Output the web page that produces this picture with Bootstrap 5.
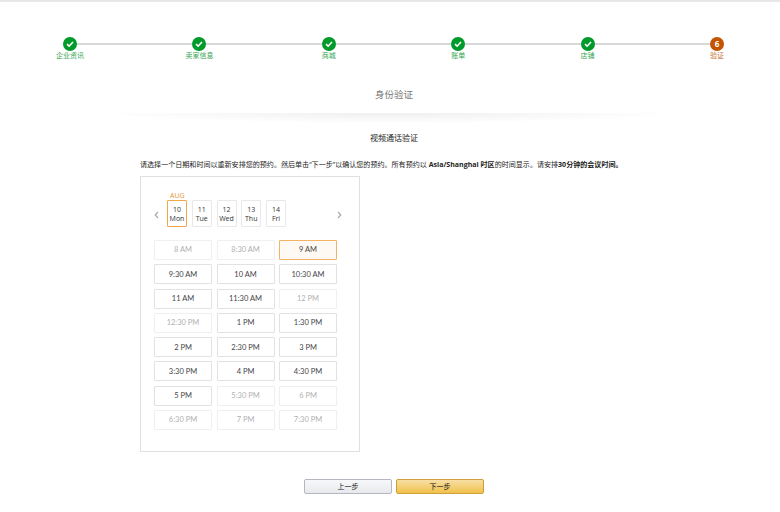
<!DOCTYPE html>
<html lang="zh">
<head>
    <meta charset="UTF-8">
    <title>身份验证</title>
    <link href="https://cdn.jsdelivr.net/npm/bootstrap@5.3.0/dist/css/bootstrap.min.css" rel="stylesheet">
    <style>
        body {
            background-color: #fff;
            border-top: 2px solid #e7e7e7;
            font-family: "Open Sans", "Noto Sans CJK SC", sans-serif;
            font-size: 7px;
            color: #111;
            height: 512px;
            overflow: hidden;
        }
        .stepper {
            position: relative;
            margin: 35px 43px 0 50px;
        }
        .stepper::before {
            content: "";
            position: absolute;
            left: 20px;
            right: 20px;
            top: 6px;
            height: 2px;
            background-color: #d8d8d8;
        }
        .step-item {
            position: relative;
            width: 40px;
            font-size: 7px;
            line-height: 10px;
            color: #35a552;
        }
        .step-item.current {
            color: #c9753a;
        }
        .step-dot {
            width: 14px;
            height: 14px;
            border-radius: 50%;
            background-color: #009a2b;
            color: #fff;
            font-size: 8px;
            font-weight: 700;
        }
        .step-item.current .step-dot {
            background-color: #c45500;
        }
        .page-title {
            margin: 27px 0 0 8px;
            font-size: 9.5px;
            line-height: 14px;
            color: #777;
        }
        .title-rule {
            height: 10px;
            margin: 11px 100px 0 100px;
            background: radial-gradient(ellipse 50% 100% at 50% 0, #efefef 0, #fff 100%);
        }
        .sub-title {
            margin: 9px 0 0 8px;
            font-size: 8px;
            line-height: 12px;
            color: #222;
        }
        .intro-text {
            margin: 14px 0 0 140px;
            font-size: 7.05px;
            line-height: 12px;
            color: #222;
            white-space: nowrap;
        }
        .slot-card {
            width: 220px;
            height: 276px;
            margin: 6px 0 0 140px;
            border: 1px solid #e0e0e0;
            padding: 13px 13px 0;
        }
        .date-row {
            height: 50px;
        }
        .date-arrow {
            width: 13px;
            line-height: 0;
        }
        .date-box {
            position: relative;
            width: 20px;
            height: 27px;
            margin-right: 4.75px;
            margin-top: 10px;
            border: 1px solid #e8e8e8;
            border-radius: 1px;
            font-size: 7px;
            line-height: 9px;
            color: #333;
        }
        .date-box.active {
            border-color: #f0a64a;
        }
        .month-tag {
            position: absolute;
            left: 2px;
            top: -10px;
            font-size: 7px;
            line-height: 9px;
            color: #e8963a;
        }
        .slot-grid {
            display: grid;
            grid-template-columns: 58px 58px 58px;
            column-gap: 4.5px;
            row-gap: 4.3px;
        }
        .slot-btn {
            height: 20px;
            border: 1px solid #e2e2e2;
            border-radius: 1px;
            box-shadow: 0 0 1px #eee;
            font-family: Lato, "Open Sans", sans-serif;
            font-size: 7.5px;
            color: #444;
        }
        .slot-btn.off {
            border-color: #f0f0f0;
            color: #b0b0b0;
        }
        .slot-btn.active {
            border-color: #f3b264;
            background-color: #fef9f2;
        }
        .nav-btn {
            width: 88px;
            height: 15px;
            padding: 0;
            border-radius: 2px;
            font-size: 7px;
            line-height: 13px;
            color: #111;
        }
        .nav-prev {
            border: 1px solid #b4b7bd;
            background: linear-gradient(#f7f8fa, #e7e9ec);
        }
        .nav-next {
            border: 1px solid #cfa03a;
            background: linear-gradient(#f7dfa5, #f0c14b);
        }
        .nav-row {
            margin: 27px 0 0 304px;
            gap: 4px;
        }
    </style>
</head>
<body>
    <div class="stepper d-flex justify-content-between">
        <div class="step-item d-flex flex-column align-items-center">
            <div class="step-dot d-flex align-items-center justify-content-center">
                <svg width="8" height="8" viewBox="0 0 8 8"><path d="M1 4.2 3.1 6.2 7 2" fill="none" stroke="#fff" stroke-width="1.6"/></svg>
            </div>
            <span>企业资讯</span>
        </div>
        <div class="step-item d-flex flex-column align-items-center">
            <div class="step-dot d-flex align-items-center justify-content-center">
                <svg width="8" height="8" viewBox="0 0 8 8"><path d="M1 4.2 3.1 6.2 7 2" fill="none" stroke="#fff" stroke-width="1.6"/></svg>
            </div>
            <span>卖家信息</span>
        </div>
        <div class="step-item d-flex flex-column align-items-center">
            <div class="step-dot d-flex align-items-center justify-content-center">
                <svg width="8" height="8" viewBox="0 0 8 8"><path d="M1 4.2 3.1 6.2 7 2" fill="none" stroke="#fff" stroke-width="1.6"/></svg>
            </div>
            <span>商城</span>
        </div>
        <div class="step-item d-flex flex-column align-items-center">
            <div class="step-dot d-flex align-items-center justify-content-center">
                <svg width="8" height="8" viewBox="0 0 8 8"><path d="M1 4.2 3.1 6.2 7 2" fill="none" stroke="#fff" stroke-width="1.6"/></svg>
            </div>
            <span>账单</span>
        </div>
        <div class="step-item d-flex flex-column align-items-center">
            <div class="step-dot d-flex align-items-center justify-content-center">
                <svg width="8" height="8" viewBox="0 0 8 8"><path d="M1 4.2 3.1 6.2 7 2" fill="none" stroke="#fff" stroke-width="1.6"/></svg>
            </div>
            <span>店铺</span>
        </div>
        <div class="step-item current d-flex flex-column align-items-center">
            <div class="step-dot d-flex align-items-center justify-content-center">6</div>
            <span>验证</span>
        </div>
    </div>

    <div class="page-title text-center">身份验证</div>
    <div class="title-rule"></div>
    <div class="sub-title text-center">视频通话验证</div>
    <div class="intro-text">请选择一个日期和时间以重新安排您的预约。然后单击“下一步”以确认您的预约。所有预约以 <b>Asia/Shanghai 时区</b>的时间显示。请安排<b>30分钟的会议时间。</b></div>

    <div class="slot-card">
        <div class="date-row d-flex align-items-start">
            <div class="date-arrow align-self-center text-start">
                <svg width="5" height="8" viewBox="0 0 5 8"><path d="M4 1 1.2 4 4 7" fill="none" stroke="#aaa" stroke-width="1.2"/></svg>
            </div>
            <div class="date-box active d-flex flex-column align-items-center justify-content-center">
                <span class="month-tag">AUG</span><span>10</span><span>Mon</span>
            </div>
            <div class="date-box d-flex flex-column align-items-center justify-content-center"><span>11</span><span>Tue</span></div>
            <div class="date-box d-flex flex-column align-items-center justify-content-center"><span>12</span><span>Wed</span></div>
            <div class="date-box d-flex flex-column align-items-center justify-content-center"><span>13</span><span>Thu</span></div>
            <div class="date-box d-flex flex-column align-items-center justify-content-center"><span>14</span><span>Fri</span></div>
            <div class="date-arrow align-self-center text-end ms-auto me-1">
                <svg width="5" height="8" viewBox="0 0 5 8"><path d="M1 1 3.8 4 1 7" fill="none" stroke="#aaa" stroke-width="1.2"/></svg>
            </div>
        </div>
        <div class="slot-grid">
            <div class="slot-btn off d-flex align-items-center justify-content-center">8 AM</div>
            <div class="slot-btn off d-flex align-items-center justify-content-center">8:30 AM</div>
            <div class="slot-btn active d-flex align-items-center justify-content-center">9 AM</div>
            <div class="slot-btn d-flex align-items-center justify-content-center">9:30 AM</div>
            <div class="slot-btn d-flex align-items-center justify-content-center">10 AM</div>
            <div class="slot-btn d-flex align-items-center justify-content-center">10:30 AM</div>
            <div class="slot-btn d-flex align-items-center justify-content-center">11 AM</div>
            <div class="slot-btn d-flex align-items-center justify-content-center">11:30 AM</div>
            <div class="slot-btn off d-flex align-items-center justify-content-center">12 PM</div>
            <div class="slot-btn off d-flex align-items-center justify-content-center">12:30 PM</div>
            <div class="slot-btn d-flex align-items-center justify-content-center">1 PM</div>
            <div class="slot-btn d-flex align-items-center justify-content-center">1:30 PM</div>
            <div class="slot-btn d-flex align-items-center justify-content-center">2 PM</div>
            <div class="slot-btn d-flex align-items-center justify-content-center">2:30 PM</div>
            <div class="slot-btn d-flex align-items-center justify-content-center">3 PM</div>
            <div class="slot-btn d-flex align-items-center justify-content-center">3:30 PM</div>
            <div class="slot-btn d-flex align-items-center justify-content-center">4 PM</div>
            <div class="slot-btn d-flex align-items-center justify-content-center">4:30 PM</div>
            <div class="slot-btn d-flex align-items-center justify-content-center">5 PM</div>
            <div class="slot-btn off d-flex align-items-center justify-content-center">5:30 PM</div>
            <div class="slot-btn off d-flex align-items-center justify-content-center">6 PM</div>
            <div class="slot-btn off d-flex align-items-center justify-content-center">6:30 PM</div>
            <div class="slot-btn off d-flex align-items-center justify-content-center">7 PM</div>
            <div class="slot-btn off d-flex align-items-center justify-content-center">7:30 PM</div>
        </div>
    </div>

    <div class="nav-row d-flex">
        <button type="button" class="btn nav-btn nav-prev">上一步</button>
        <button type="button" class="btn nav-btn nav-next">下一步</button>
    </div>

    <script src="https://cdn.jsdelivr.net/npm/bootstrap@5.3.0/dist/js/bootstrap.bundle.min.js"></script>
</body>
</html>
